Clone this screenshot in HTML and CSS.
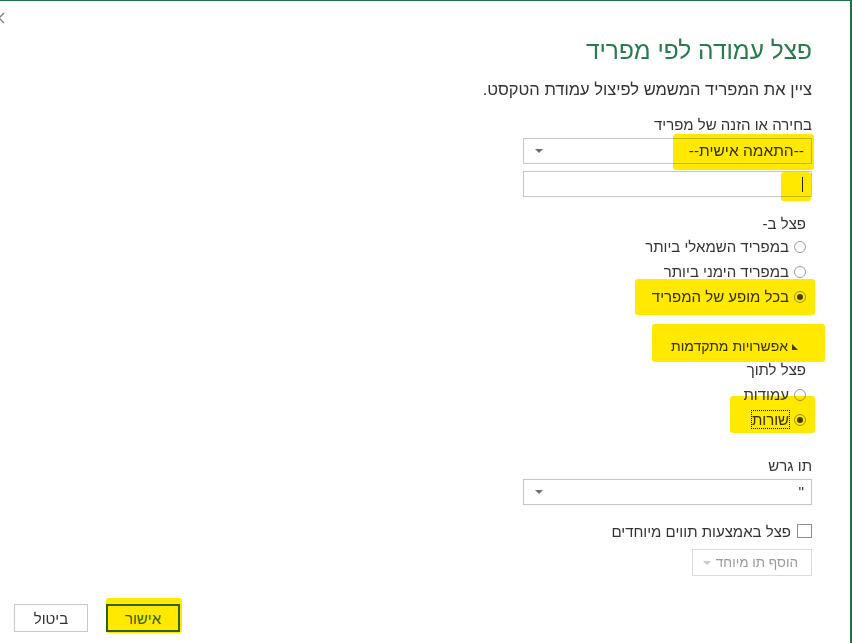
FILE: index.html
```html
<!DOCTYPE html>
<html lang="he" dir="rtl">
<head>
    <meta charset="UTF-8">
    <title>פצל עמודה לפי מפריד</title>
    <link rel="stylesheet" href="styles.css">
</head>
<body>
    <div class="dialog">
        <span class="close-btn">
            <svg width="12" height="12" viewBox="0 0 12 12"><path d="M1 1 L11 11 M1 11 L11 1" stroke="#808080" stroke-width="1.3" fill="none"/></svg>
        </span>

        <div class="content">
            <h1 class="title">פצל עמודה לפי מפריד</h1>
            <p class="intro">ציין את המפריד המשמש לפיצול עמודת הטקסט.</p>

            <div class="form">
                <div class="field-label">בחירה או הזנה של מפריד</div>
                <div class="select mark-host">
                    <span class="select-value">--התאמה אישית--</span>
                    <span class="caret"></span>
                    <span class="mark mark-select"></span>
                </div>
                <div class="text-input mark-host">
                    <span class="cursor"></span>
                    <span class="mark mark-input"></span>
                </div>

                <div class="group-label first-group">פצל ב-</div>
                <div class="radio-row"><span class="radio"></span><span>במפריד השמאלי ביותר</span></div>
                <div class="radio-row"><span class="radio"></span><span>במפריד הימני ביותר</span></div>
                <div class="radio-row mark-host"><span class="radio checked"></span><span>בכל מופע של המפריד</span><span class="mark mark-each"></span></div>

                <div class="advanced mark-host"><span class="tri"></span><span>אפשרויות מתקדמות</span><span class="mark mark-adv"></span></div>
                <div class="group-label">פצל לתוך</div>
                <div class="radio-row"><span class="radio"></span><span>עמודות</span></div>
                <div class="radio-row mark-host"><span class="radio checked"></span><span class="focused">שורות</span><span class="mark mark-rows"></span></div>

                <div class="field-label quote-label">תו גרש</div>
                <div class="select">
                    <span class="select-value">"</span>
                    <span class="caret"></span>
                </div>

                <div class="check-row"><span class="checkbox"></span><span>פצל באמצעות תווים מיוחדים</span></div>
                <button class="add-btn" disabled><span>הוסף תו מיוחד</span><span class="caret light"></span></button>
            </div>
        </div>

        <div class="footer">
            <button class="btn btn-ok mark-host">אישור<span class="mark mark-ok"></span></button>
            <button class="btn">ביטול</button>
        </div>
    </div>
</body>
</html>
```

FILE: styles.css
```css
* {
    margin: 0;
    padding: 0;
    box-sizing: border-box;
}

body {
    font-family: 'Liberation Sans', 'DejaVu Sans', Arial, sans-serif;
    color: #333;
    background-color: #fff;
    font-size: 15px;
}

.dialog {
    position: relative;
    height: 643px;
    border-top: 1px solid #217346;
    border-right: 2px solid #217346;
    display: flex;
    flex-direction: column;
    direction: rtl;
    overflow: hidden;
}

.close-btn {
    position: absolute;
    left: -7px;
    top: 11px;
    line-height: 0;
}

.content {
    padding: 34px 38px 0 0;
}

.title {
    font-size: 24.5px;
    font-weight: 300;
    line-height: 32px;
    color: #2a7a50;
}

.intro {
    margin-top: 11px;
    line-height: 22px;
    font-size: 16.5px;
}

.form {
    width: 289px;
}

.field-label {
    margin-top: 15px;
    line-height: 20px;
}

.quote-label {
    margin-top: 24px;
}

.mark-host {
    position: relative;
}

/* yellow marker scribbles drawn over the screenshot */
.mark {
    position: absolute;
    background-color: #ffe900;
    mix-blend-mode: multiply;
    pointer-events: none;
    border-radius: 3px;
}

.mark-select { right: -3px; left: 149px; top: -5px; bottom: -7px; }
.mark-input { right: 0; width: 30px; top: 0; bottom: -5px; }
.mark-each { right: -3px; left: 112px; top: -5px; bottom: -6px; }
.mark-adv { right: -13px; left: 129px; top: -10px; bottom: -4px; }
.mark-rows { right: -3px; left: 207px; top: -11px; bottom: -1px; }
.mark-ok { right: -4px; left: -2px; top: -8px; bottom: -3px; }

.select,
.text-input {
    height: 26px;
    border: 1px solid #c6c6c6;
    background-color: #fff;
    display: flex;
    align-items: center;
    justify-content: space-between;
    padding: 0 7px 0 11px;
}

.select {
    margin-top: 3px;
}

.text-input {
    margin-top: 7px;
}

.select-value {
    line-height: 20px;
    font-size: 15.5px;
}

.caret {
    width: 0;
    height: 0;
    border-top: 4px solid #6f6f6f;
    border-left: 4px solid transparent;
    border-right: 4px solid transparent;
}

.caret.light {
    border-top-color: #c8c8c8;
}

.cursor {
    width: 1px;
    height: 15px;
    background-color: #222;
    margin-right: 1px;
}

.group-label {
    line-height: 24px;
    padding-right: 6px;
}

.first-group {
    margin-top: 17px;
    line-height: 20px;
}

.radio-row {
    height: 25px;
    display: flex;
    align-items: center;
    padding-right: 6px;
}

.radio {
    width: 12px;
    height: 12px;
    border: 1px solid #9c9c9c;
    border-radius: 50%;
    margin-left: 5px;
    display: flex;
    align-items: center;
    justify-content: center;
}

.radio.checked::after {
    content: '';
    width: 6px;
    height: 6px;
    border-radius: 50%;
    background-color: #444;
}

.focused {
    outline: 1px dotted #111;
    outline-offset: 0;
    line-height: 17px;
}

.advanced {
    margin-top: 25px;
    height: 24px;
    display: flex;
    align-items: center;
    padding-right: 14px;
    font-size: 14px;
}

.tri {
    width: 0;
    height: 0;
    border-bottom: 6px solid #444;
    border-right: 6px solid transparent;
    margin-left: 4px;
    margin-top: 2px;
}

.check-row {
    margin-top: 14px;
    height: 24px;
    display: flex;
    align-items: center;
}

.checkbox {
    width: 15px;
    height: 14px;
    border: 1px solid #8c8c8c;
    margin-left: 6px;
}

.add-btn {
    margin-top: 6px;
    width: 120px;
    height: 27px;
    border: 1px solid #dcdcdc;
    background-color: #fff;
    color: #9a9a9a;
    font-family: inherit;
    font-size: 13.5px;
    white-space: nowrap;
    display: flex;
    align-items: center;
    justify-content: space-between;
    padding: 0 13px 0 10px;
}

.footer {
    margin-top: auto;
    display: flex;
    justify-content: flex-end;
    gap: 18px;
    padding: 0 0 11px 14px;
}

.btn {
    width: 74px;
    height: 28px;
    border: 1px solid #c8c8c8;
    background-color: #fff;
    color: #333;
    font-family: inherit;
    font-size: 15px;
}

.btn-ok {
    border: 2px solid #2f6e35;
    color: #2d6a2b;
}
```
